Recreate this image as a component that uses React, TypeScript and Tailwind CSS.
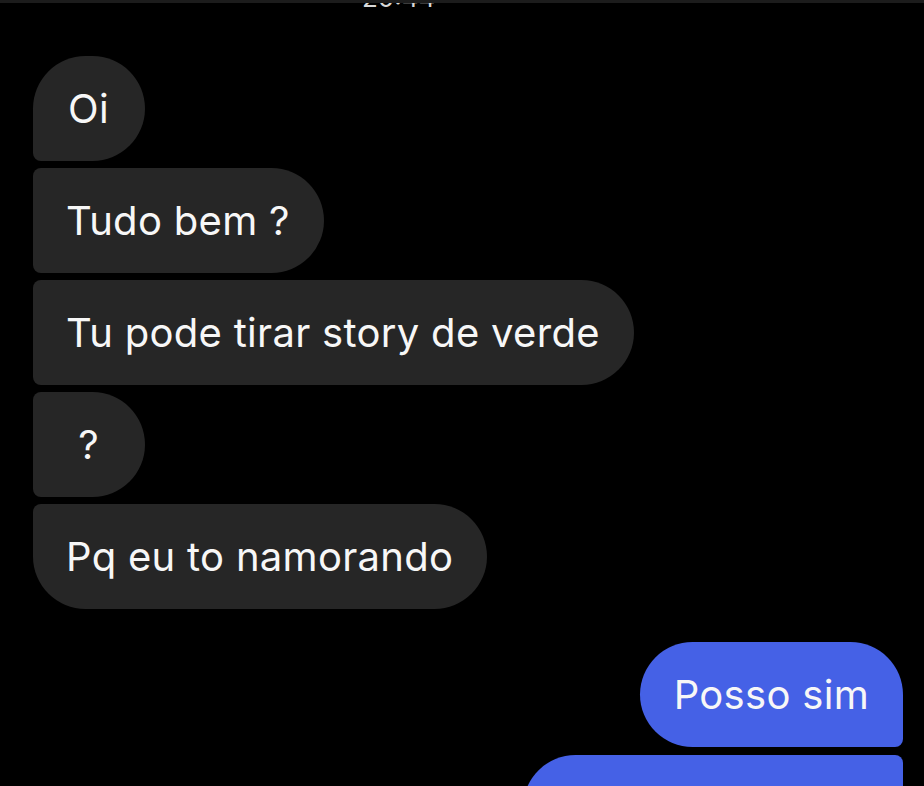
import React from "react";

type Msg = { text: string; shape: string };

const incoming: Msg[] = [
  { text: "Oi", shape: "rounded-tl-[53px] rounded-bl-[8px]" },
  { text: "Tudo bem ?", shape: "rounded-tl-[8px] rounded-bl-[8px]" },
  { text: "Tu pode tirar story de verde", shape: "rounded-tl-[8px] rounded-bl-[8px]" },
  { text: "?", shape: "rounded-tl-[8px] rounded-bl-[8px]" },
  { text: "Pq eu to namorando", shape: "rounded-tl-[8px] rounded-bl-[53px]" },
];

export default function App() {
  return (
    <div
      className="h-[786px] w-[924px] overflow-hidden bg-black text-[#f7f7f7]"
      style={{ fontFamily: "Inter, 'Liberation Sans', sans-serif" }}
    >
      {/* top bar + clipped timestamp */}
      <div className="h-[3px] bg-[#1c1c1c]" />
      <div className="flex h-[5px] items-end overflow-hidden pl-[362px]">
        <span className="translate-y-[3px] text-[26px] leading-none text-[#d8d8d8]">20:44</span>
      </div>

      {/* received messages */}
      <div className="mt-[48px] flex flex-col items-start gap-[7px] pl-[33px]">
        {incoming.map((m) => (
          <div
            key={m.text}
            className={`flex h-[105px] min-w-[112px] items-center justify-center rounded-r-[53px] bg-[#262626] pl-[33px] pr-[34px] text-[40px] leading-none tracking-[0.3px] ${m.shape}`}
          >
            {m.text}
          </div>
        ))}
      </div>

      {/* sent messages */}
      <div className="mt-[33px] flex flex-col items-end gap-[8px] pr-[21px]">
        <div className="flex h-[105px] items-center rounded-l-[53px] rounded-tr-[53px] rounded-br-[8px] bg-[#4561e6] pl-[34px] pr-[34px] text-[40px] leading-none tracking-[0.3px]">
          Posso sim
        </div>
        <div className="h-[105px] w-[380px] rounded-l-[53px] rounded-tr-[8px] bg-[#4561e6]" />
      </div>
    </div>
  );
}
